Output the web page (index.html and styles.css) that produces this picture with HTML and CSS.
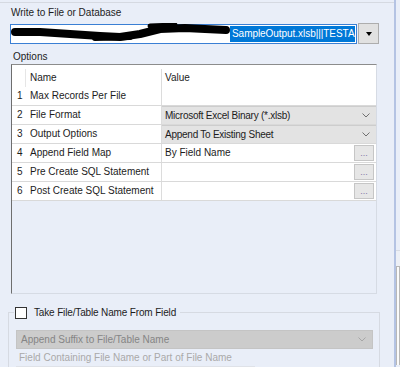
FILE: index.html
```html
<!DOCTYPE html>
<html lang="en">
<head>
    <meta charset="UTF-8">
    <title>Write to File or Database</title>
    <link rel="stylesheet" href="styles.css">
</head>

<body>
    <div class="panel">
        <div class="field-label">Write to File or Database</div>
        <div class="path-row">
            <div class="path-box">
                <span class="path-hidden"></span>
                <span class="path-sel">SampleOutput.xlsb|||TESTA</span>
            </div>
            <button class="drop-btn"><span class="tri"></span></button>
            <!-- redacted path -->
            <svg class="redact" width="230" height="22" viewBox="0 0 230 22">
                <polyline points="5,9 30,9 60,11 90,13 110,14 130,11 150,6 175,5 195,6 216,7" fill="none" stroke="#000" stroke-width="8" stroke-linecap="round" stroke-linejoin="round"/>
                <polyline points="85,15 120,14" fill="none" stroke="#000" stroke-width="6" stroke-linecap="round"/>
                <polyline points="140,3 165,2" fill="none" stroke="#000" stroke-width="5" stroke-linecap="round"/>
            </svg>
        </div>

        <div class="section-label">Options</div>
        <div class="grid">
            <div class="grid-head">
                <span class="num"></span>
                <span class="name">Name</span>
                <span class="val">Value</span>
            </div>
            <div class="grid-row">
                <span class="num">1</span>
                <span class="name">Max Records Per File</span>
                <span class="val"></span>
                <span class="btn-cell"></span>
            </div>
            <div class="grid-row">
                <span class="num">2</span>
                <span class="name">File Format</span>
                <span class="combo">Microsoft Excel Binary (*.xlsb)<svg class="chev" width="8" height="5" viewBox="0 0 8 5"><polyline points="0.5,0.5 4,4 7.5,0.5" fill="none" stroke="#707070" stroke-width="1"/></svg></span>
            </div>
            <div class="grid-row">
                <span class="num">3</span>
                <span class="name">Output Options</span>
                <span class="combo">Append To Existing Sheet<svg class="chev" width="8" height="5" viewBox="0 0 8 5"><polyline points="0.5,0.5 4,4 7.5,0.5" fill="none" stroke="#707070" stroke-width="1"/></svg></span>
            </div>
            <div class="grid-row">
                <span class="num">4</span>
                <span class="name">Append Field Map</span>
                <span class="val">By Field Name</span>
                <span class="btn-cell"><span class="dots">...</span></span>
            </div>
            <div class="grid-row">
                <span class="num">5</span>
                <span class="name">Pre Create SQL Statement</span>
                <span class="val"></span>
                <span class="btn-cell"><span class="dots">...</span></span>
            </div>
            <div class="grid-row">
                <span class="num">6</span>
                <span class="name">Post Create SQL Statement</span>
                <span class="val"></span>
                <span class="btn-cell"><span class="dots">...</span></span>
            </div>
        </div>

        <fieldset class="group">
            <legend><span class="check"></span>Take File/Table Name From Field</legend>
            <div class="combo-off">Append Suffix to File/Table Name<svg class="chev" width="8" height="5" viewBox="0 0 8 5"><polyline points="0.5,0.5 4,4 7.5,0.5" fill="none" stroke="#a6a6a6" stroke-width="1"/></svg></div>
            <div class="hint">Field Containing File Name or Part of File Name</div>
            <div class="field-off"></div>
        </fieldset>
    </div>
    <div class="side">
        <div class="side-bar"></div>
        <div class="side-box"></div>
    </div>
</body>
</html>
```

FILE: styles.css
```css
* {
    box-sizing: border-box;
}

body {
    margin: 0;
    width: 400px;
    height: 367px;
    overflow: hidden;
    display: flex;
    background-color: #e9eef8;
    font-family: 'Liberation Sans', Arial, sans-serif;
    font-size: 10px;
    color: #1c1c1c;
}

.panel {
    flex: none;
    width: 394px;
    margin-top: 2px;
    border-top: 1px solid #d5d9e1;
}

.side {
    flex: 1;
    border-left: 2px solid #b4c3e3;
    padding-top: 250px;
}

.side-bar {
    height: 16px;
    border-top: 1px solid #d8dce4;
    background-color: #edf0f6;
}

.side-box {
    height: 99px;
    border: 1px solid #b8b8b8;
    border-bottom: none;
    background-color: #fbfbfb;
}

.field-label {
    margin-top: 4px;
    padding-left: 11px;
    line-height: 12px;
}

.path-row {
    position: relative;
    display: flex;
    align-items: center;
    gap: 1px;
    margin: 4px 0 0 10px;
    height: 21px;
}

.path-box {
    display: flex;
    align-items: center;
    width: 347px;
    height: 20px;
    padding: 0 1px 0 0;
    border: 1px solid #3a7fd4;
    background-color: #fff;
    overflow: hidden;
}

.path-hidden {
    flex: none;
    width: 219px;
}

.path-sel {
    flex: none;
    width: 125px;
    height: 16px;
    padding-left: 2px;
    line-height: 16px;
    background-color: #0078d7;
    color: #fff;
    letter-spacing: -0.05px;
    white-space: nowrap;
    overflow: hidden;
}

.drop-btn {
    display: flex;
    align-items: center;
    justify-content: center;
    width: 21px;
    height: 21px;
    padding: 0;
    border: 1px solid #adadad;
    background-color: #e1e1e1;
}

.tri {
    width: 0;
    height: 0;
    border-left: 3.5px solid transparent;
    border-right: 3.5px solid transparent;
    border-top: 4px solid #000;
}

.redact {
    position: absolute;
    left: 0;
    top: 0;
}

.section-label {
    margin-top: 7px;
    padding-left: 13px;
    line-height: 12px;
}

/* options grid */
.grid {
    margin: 1px 0 0 11px;
    width: 366px;
    height: 230px;
    border-left: 1px solid #6e6e6e;
    border-top: 1px solid #8c8c8c;
    border-right: 1px solid #d6dbe4;
    border-bottom: 1px solid #d6dbe4;
}

.grid-head,
.grid-row {
    display: flex;
    background-color: #fff;
    line-height: 18px;
    white-space: nowrap;
}

.grid-head {
    height: 22px;
    padding-top: 4px;
}

.grid-row {
    height: 19px;
    border-bottom: 1px solid #d9d9d9;
}

.num {
    flex: none;
    width: 14px;
    padding-left: 5px;
}

.grid-head .num {
    border-right: 1px solid #e6e6e6;
}

.name {
    flex: none;
    width: 136px;
    padding-left: 4px;
    border-right: 1px solid #dcdcdc;
}

.val {
    flex: none;
    width: 190px;
    padding-left: 3px;
}

.grid-head .val {
    width: 214px;
}

.btn-cell {
    flex: none;
    width: 24px;
    padding: 1px 2px 1px 2px;
}

.dots {
    display: block;
    height: 16px;
    border: 1px solid #c6c6c6;
    background-color: #e6e6e6;
    color: #8577a6;
    font-size: 9px;
    line-height: 14px;
    text-align: center;
}

.combo {
    flex: none;
    display: flex;
    align-items: center;
    justify-content: space-between;
    width: 214px;
    padding: 0 6px 0 3px;
    background-color: #e3e3e3;
    border-top: 1px solid #cdcdcd;
    letter-spacing: -0.25px;
    line-height: 17px;
}

/* lower group */
.group {
    margin: 12px 0 0 8px;
    width: 372px;
    height: 61px;
    padding: 0 6px 0 7px;
    border: 1px solid #d6dae2;
    border-bottom: none;
}

.group legend {
    display: flex;
    align-items: center;
    gap: 7px;
    margin-left: -2px;
    padding: 0 4px 0 1px;
    line-height: 13px;
    letter-spacing: -0.15px;
    color: #1c1c1c;
}

.check {
    width: 12px;
    height: 12px;
    border: 1px solid #333;
    background-color: #fff;
}

.combo-off {
    display: flex;
    align-items: center;
    justify-content: space-between;
    margin-top: 11px;
    height: 19px;
    padding: 0 6px 0 4px;
    background-color: #cccccc;
    border: 1px solid #c4c4c4;
    color: #858585;
}

.hint {
    margin-top: 3px;
    padding-left: 3px;
    line-height: 12px;
    color: #a9a9a9;
}

.field-off {
    margin-top: 2px;
    width: 239px;
    height: 3px;
    border-top: 1px solid #dfe2e8;
    background-color: #f3f4f7;
}
```
